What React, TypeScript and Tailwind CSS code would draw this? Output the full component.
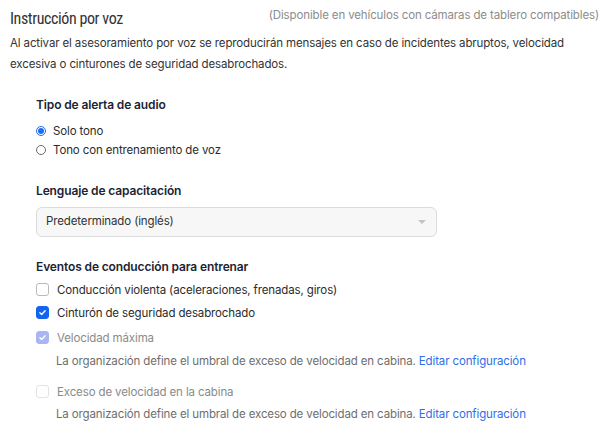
import React from "react";

const body = "text-[11.5px] tracking-[-0.13px]";

function Radio({ checked, label }: { checked?: boolean; label: string }) {
  return (
    <label className="flex h-[19px] items-center gap-[7px]">
      {checked ? (
        <span className="flex h-[10px] w-[10px] items-center justify-center rounded-full border border-[#1b6ef3] bg-white">
          <span className="h-[6px] w-[6px] rounded-full bg-[#1b6ef3]" />
        </span>
      ) : (
        <span className="h-[10px] w-[10px] rounded-full border border-[#6b6b6b] bg-white" />
      )}
      <span className={`${body} leading-[16px] text-[#2b2b2b]`}>{label}</span>
    </label>
  );
}

function Check({ state, label }: { state: "off" | "on" | "disabled-on" | "disabled-off"; label: string }) {
  const box =
    state === "on"
      ? "bg-[#1366ec] border-[#1366ec]"
      : state === "disabled-on"
        ? "bg-[#a9b6f4] border-[#a9b6f4]"
        : state === "disabled-off"
          ? "bg-white border-[#e3e3e3]"
          : "bg-white border-[#b9b9b9]";
  const text = state.startsWith("disabled") ? "text-[#8a8a8a]" : "text-[#2b2b2b]";
  return (
    <label className="flex h-[23px] items-center gap-[8px]">
      <span className={`flex h-[13px] w-[13px] shrink-0 items-center justify-center rounded-[3px] border ${box}`}>
        {state === "on" || state === "disabled-on" ? (
          <svg viewBox="0 0 12 12" className="h-[9px] w-[9px]" fill="none" stroke="white" strokeWidth="1.8" strokeLinecap="round" strokeLinejoin="round">
            <path d="M2.5 6.3 4.9 8.6 9.5 3.6" />
          </svg>
        ) : null}
      </span>
      <span className={`${body} leading-[16px] ${text}`}>{label}</span>
    </label>
  );
}

function Hint() {
  return (
    <div className={`pl-[20px] ${body} leading-[16px] text-[#6e6e6e]`}>
      La organización define el umbral de exceso de velocidad en cabina.{" "}
      <a className="text-[#2f6ee8]">Editar configuración</a>
    </div>
  );
}

export default function App() {
  return (
    <div className="min-h-[441px] w-[612px] bg-white px-[10px] pt-[6px]" style={{ fontFamily: "Inter, 'Noto Sans', sans-serif" }}>
      <div className="flex items-start justify-between">
        <h1
          className="text-[16px] font-normal leading-[26px] tracking-[-0.4px] text-[#333333]"
          style={{ fontFamily: "'Liberation Sans Narrow', 'Roboto Condensed', 'DejaVu Sans Condensed', Roboto, sans-serif" }}
        >
          Instrucción por voz
        </h1>
        <span className={`pt-[1px] pr-[3px] ${body} leading-[16px] text-[#8c8c8c]`}>(Disponible en vehículos con cámaras de tablero compatibles)</span>
      </div>
      <p className={`mt-[1px] ${body} leading-[21px] text-[#333333]`}>
        Al activar el asesoramiento por voz se reproducirán mensajes en caso de incidentes abruptos, velocidad excesiva o cinturones de seguridad desabrochados.
      </p>

      <div className="pl-[26px]">
        <div className="mt-[22px] text-[12px] font-semibold leading-[16px] tracking-[-0.13px] text-[#1c2434]">Tipo de alerta de audio</div>
        <div className="mt-[8px] flex flex-col">
          <Radio checked label="Solo tono" />
          <Radio label="Tono con entrenamiento de voz" />
        </div>

        <div className="mt-[24px] text-[12px] font-semibold leading-[16px] tracking-[-0.13px] text-[#1c2434]">Lenguaje de capacitación</div>
        <div className="mt-[8px] flex h-[30px] w-[401px] items-center justify-between rounded-[6px] border border-[#dcdcdc] bg-[#f7f7f7] pl-[9px] pr-[10px]">
          <span className={`${body} text-[#333333]`}>Predeterminado (inglés)</span>
          <span className="h-0 w-0 border-x-[4px] border-t-[4px] border-x-transparent border-t-[#c4c4c4]" />
        </div>

        <div className="mt-[22px] text-[12px] font-semibold leading-[16px] tracking-[-0.13px] text-[#1c2434]">Eventos de conducción para entrenar</div>
        <div className="mt-[3px] flex flex-col">
          <Check state="off" label="Conducción violenta (aceleraciones, frenadas, giros)" />
          <Check state="on" label="Cinturón de seguridad desabrochado" />
          <div className="mt-[2px]">
            <Check state="disabled-on" label="Velocidad máxima" />
          </div>
          <div className="mt-[4px]">
            <Hint />
          </div>
          <div className="mt-[11px]">
            <Check state="disabled-off" label="Exceso de velocidad en la cabina" />
          </div>
          <div className="mt-[3px]">
            <Hint />
          </div>
        </div>
      </div>
    </div>
  );
}
